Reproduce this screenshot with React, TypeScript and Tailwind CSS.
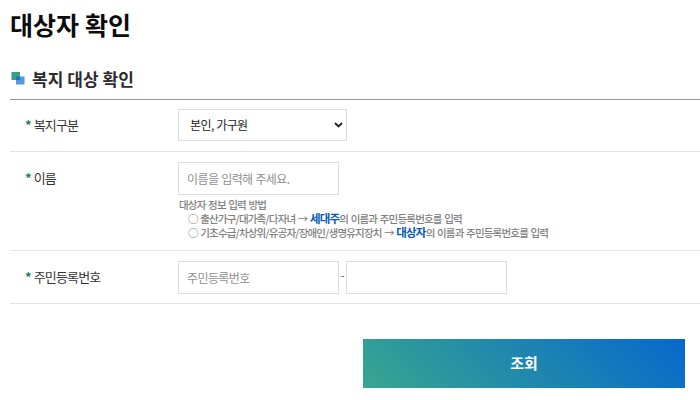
import type { ReactNode } from 'react'

const inputClass =
  'h-[33px] w-[161px] border border-[#dcdcdc] bg-white px-2 text-[12px] tracking-[-0.6px] [word-spacing:0.8px] text-[#333] outline-none placeholder:text-[#8f8f8f] placeholder:opacity-100'

function Label({ children }: { children: ReactNode }) {
  return (
    <div className="w-[168px] shrink-0 pl-[15px] text-[13px] leading-[32px] tracking-[-0.85px] text-[#333]">
      <span className="mr-[3px] font-bold text-[#16845a]">*</span>
      {children}
    </div>
  )
}

export default function App() {
  return (
    <main className="h-[400px] w-[700px] overflow-hidden bg-white pl-[10px] font-['Noto_Sans_CJK_KR',sans-serif]">
      <h1 className="pt-[6px] text-[25px] leading-[36px] font-bold tracking-[0.05px] text-[#0c0c0c]">대상자 확인</h1>

      <div className="mt-[24px] flex h-[34px] items-center border-b border-[#999] pb-[8px]">
        <svg width="15" height="15" viewBox="0 0 15 15" className="mr-[7px]" aria-hidden="true">
          <rect x="1.5" y="1" width="8.5" height="8" fill="#32a08c" />
          <rect x="6" y="5.5" width="8.5" height="8" fill="#5598dc" />
          <rect x="6" y="5.5" width="4" height="3.5" fill="#1a75b0" />
        </svg>
        <h2 className="text-[17px] leading-[24px] font-bold tracking-[0.05px] text-[#2c2c2c]">복지 대상 확인</h2>
      </div>

      <div className="flex h-[52px] border-b border-[#e3e3e3] pt-[9px]">
        <Label>복지구분</Label>
        <div className="relative">
          <select className="h-[32px] w-[169px] appearance-none border border-[#dcdcdc] bg-white px-[11px] text-[12px] tracking-[-0.6px] [word-spacing:0.5px] text-[#222]">
            <option>본인, 가구원</option>
          </select>
          <svg width="9" height="6" viewBox="0 0 9 6" className="pointer-events-none absolute top-[13px] right-[4px]" aria-hidden="true">
            <path d="M1 1l3.5 3.5L8 1" fill="none" stroke="#222" strokeWidth="1.8" />
          </svg>
        </div>
      </div>

      <div className="flex h-[99px] border-b border-[#e3e3e3] pt-[10px]">
        <Label>이름</Label>
        <div>
          <input className={inputClass} placeholder="이름을 입력해 주세요." />
          <div className="mt-[3px] pl-px text-[10.5px] leading-[14px] font-medium tracking-[-0.8px] [word-spacing:0.9px] whitespace-nowrap text-[#808080]">
            <p>대상자 정보 입력 방법</p>
            <p className="pl-[9px]">
              ○ 출산가구/대가족/다자녀 → <b className="text-[11.5px] leading-none text-[#075bb5]">세대주</b>의 이름과 주민등록번호를 입력
            </p>
            <p className="pl-[9px]">
              ○ 기초수급/차상위/유공자/장애인/생명유지장치 → <b className="text-[11.5px] leading-none text-[#075bb5]">대상자</b>의 이름과 주민등록번호를 입력
            </p>
          </div>
        </div>
      </div>

      <div className="flex h-[53px] border-b border-[#e3e3e3] pt-[10px]">
        <Label>주민등록번호</Label>
        <div className="flex">
          <input className={inputClass} placeholder="주민등록번호" />
          <span className="w-[7px] text-center text-[12px] leading-[28px] text-[#666]">-</span>
          <input className={inputClass} aria-label="주민등록번호 뒷자리" />
        </div>
      </div>

      <button className="mt-[35px] ml-[353px] h-[49px] w-[322px] bg-[linear-gradient(45deg,#38a68f,#0668cd)] text-[15px] font-bold text-white">
        조회
      </button>
    </main>
  )
}
